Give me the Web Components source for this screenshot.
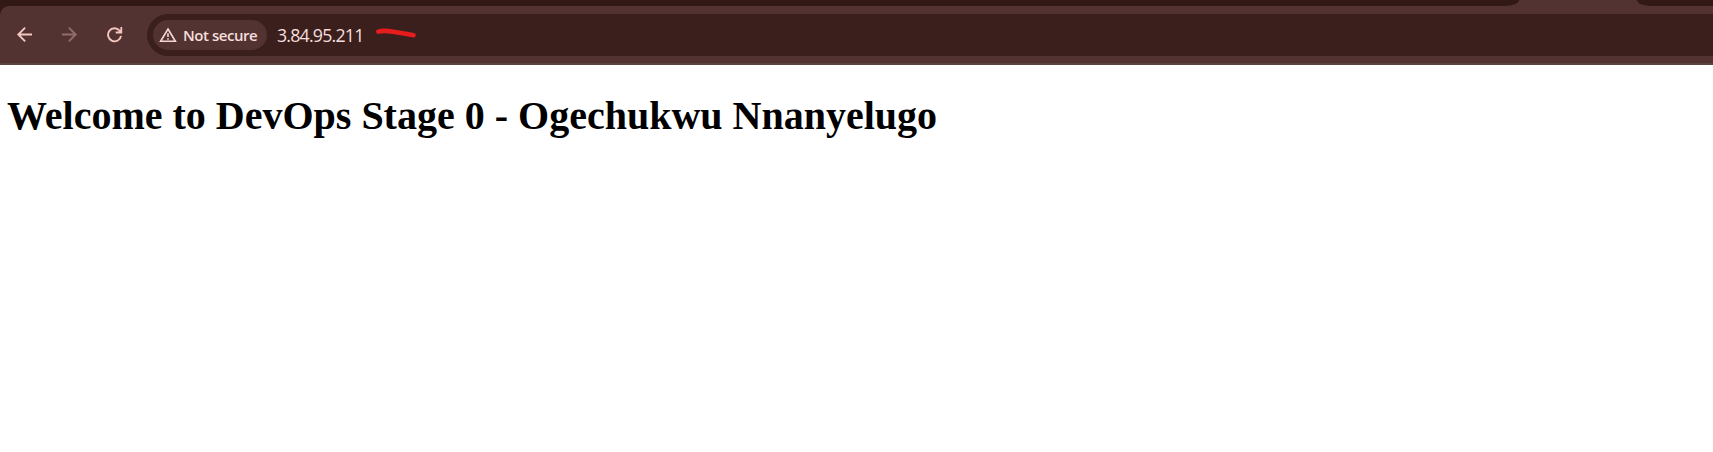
<!DOCTYPE html>
<html lang="en"><head><meta charset="utf-8"><title>3.84.95.211</title>
<style>html,body{margin:0;background:#fff}body{overflow:hidden}</style></head>
<body>
<browser-window>
  <tab-strip slot="chrome"></tab-strip>
  <nav-toolbar slot="chrome"><address-bar><security-chip slot="chip">Not secure</security-chip>3.84.95.211</address-bar></nav-toolbar>
  <page-heading>Welcome to DevOps Stage 0 - Ogechukwu Nnanyelugo</page-heading>
</browser-window>
<script>
const define=(name,html)=>customElements.define(name,class extends HTMLElement{
  constructor(){super();this.attachShadow({mode:'open'}).innerHTML=html;}
});
define('browser-window',`<style>:host{display:flex;flex-direction:column;width:100%;height:452px;background:#fff}header{display:flex;flex-direction:column;background:#523331}</style>
<header><slot name="chrome"></slot></header><main><slot></slot></main>`);
define('tab-strip',`<style>:host{display:flex;height:6px;background:#523331}
.a,.b{background:#321916}.a{width:1519px;border-bottom-right-radius:14px 6px}.b{flex:1;margin-left:118px;border-bottom-left-radius:14px 6px}</style>
<div class="a"></div><div class="b"></div>`);
define('nav-toolbar',`<style>:host{display:flex;box-sizing:border-box;height:59px;padding:8px 0 7px 17px;align-items:center;background:radial-gradient(circle at 9px 9px,#523331 8.5px,#321916 9px) 0 0/9px 9px no-repeat,#523331;border-bottom:2px solid #5a4541}
nav{display:flex;gap:29px;width:130px;flex:none}svg{display:block;width:16px;height:16px;fill:none;stroke:#f3c6c0;stroke-width:1.9}
.off{stroke:#906d6a}.head{fill:#f3c6c0;stroke:none}</style>
<nav><svg viewBox="0 0 16 16"><path d="M15 7.5H1.4M8.1.7L1.3 7.5l6.8 6.8"/></svg>
<svg class="off" viewBox="0 0 16 16"><path d="M0 7.5h13.6M6.9.7l6.8 6.8-6.8 6.8"/></svg>
<svg viewBox="0 0 16 16"><path d="M12.6 3.7A6.5 6.5 0 1 0 14 8.8"/><path class="head" d="M15.2 0V6.4H8.7V4.6H11.3L13.4 2.8V0Z"/></svg></nav>
<slot></slot>`);
define('address-bar',`<style>:host{display:flex;flex:1;box-sizing:border-box;height:42px;padding-left:6px;align-items:center;background:#3a1f1c;border-radius:21px 0 0 21px;font:17.8px/24px "Open Sans","Noto Sans",sans-serif;color:#f5dedb}
.url{width:88px;margin-left:10px;letter-spacing:-.8px;white-space:nowrap}svg{width:42px;height:12px;margin-left:10px;margin-top:-3px}</style>
<slot name="chip"></slot><span class="url"><slot></slot></span>
<svg viewBox="0 0 42 12"><path d="M3.3 3.6Q8 2 20 4T38.5 7.2" fill="none" stroke="#e71c1c" stroke-width="4.6" stroke-linecap="round"/></svg>`);
define('security-chip',`<style>:host{display:flex;box-sizing:border-box;width:114px;height:30px;align-items:center;padding-left:6px;background:#523331;border-radius:15px;font:600 15px/20px "Open Sans","Noto Sans",sans-serif;letter-spacing:-.45px;color:#f5dedb;white-space:nowrap}
svg{width:18px;height:16px;margin-right:6px;flex:none}span{margin-top:-1px}</style>
<svg viewBox="0 0 18 16" fill="none" stroke="#f5d8d4" stroke-width="1.6"><path d="M9 2L16.4 14.3H1.6Z"/><path d="M9 6.3v3.8M9 11.2v1.6"/></svg><span><slot></slot></span>`);
define('page-heading',`<style>:host{display:block;padding:27px 7px}h1{margin:0;font:bold 40px/48px "Liberation Serif","Times New Roman",serif;color:#000;white-space:nowrap}</style><h1><slot></slot></h1>`);
</script></body></html>
